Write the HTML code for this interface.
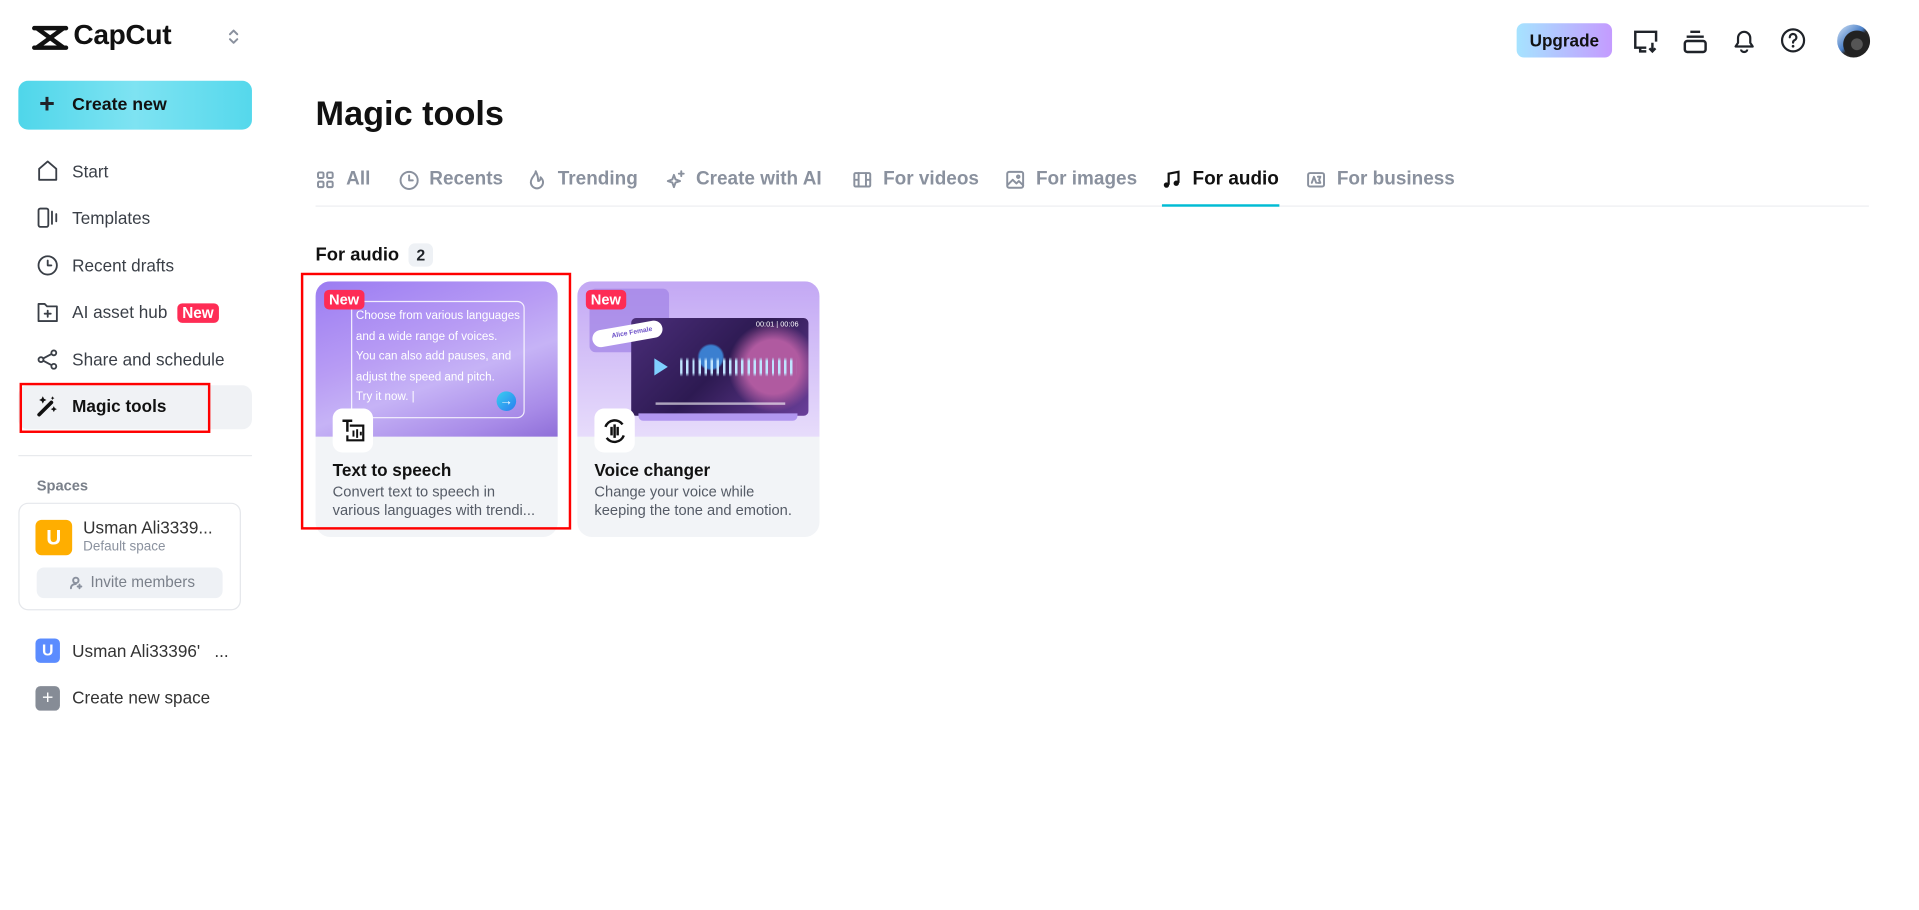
<!DOCTYPE html>
<html><head><meta charset="utf-8"><style>
html,body{margin:0;padding:0;width:1919px;height:910px;overflow:hidden;background:#fff}
#w{position:absolute;left:0;top:0;width:1569px;height:744px;transform:scale(1.2231);transform-origin:0 0;font-family:"Liberation Sans",sans-serif;color:#1f2329}
.a{position:absolute}
.nav{position:absolute;left:30px;font-size:14px;color:#3a3f47;height:20px;line-height:20px}
.nav svg{position:absolute;left:0;top:1px}
.nav span{position:absolute;left:29px;white-space:nowrap}
.tab{position:absolute;top:137px;font-size:15.5px;font-weight:bold;color:#8a919e;white-space:nowrap;height:20px;line-height:20px}
.tab svg{position:absolute;left:0;top:2px}
.tab span{position:absolute;left:25px}
.card{position:absolute;top:230px;width:198px;height:209px;border-radius:12px;overflow:hidden;background:#f2f4f7}
.new{position:absolute;background:#fe2c55;color:#fff;font-weight:bold;font-size:12px;padding:0 4px;height:16px;line-height:16px;border-radius:4px}
.ic{position:absolute;left:14px;top:104px;width:33px;height:36px;background:#fff;border-radius:8px}
.ct{position:absolute;left:14px;top:146px;font-size:14px;font-weight:bold;color:#111}
.cd{position:absolute;left:14px;top:165px;font-size:12px;line-height:15px;color:#555b66;width:180px}
.g{stroke:#8a919e;fill:none;stroke-width:1.6;stroke-linecap:round;stroke-linejoin:round}
.n{stroke:#3a3f47;fill:none;stroke-width:1.5;stroke-linecap:round;stroke-linejoin:round}
</style></head><body><div id="w">
<svg class="a" style="left:26px;top:20px" width="30" height="22" viewBox="0 0 30 22"><path d="M2 3h26M2 19h26M4 3l22 16M26 3L4 19" stroke="#111" stroke-width="3.6" fill="none" stroke-linecap="round"/></svg>
<div class="a" style="left:60px;top:15px;font-size:23px;font-weight:bold;color:#111;letter-spacing:-0.3px">CapCut</div>
<svg class="a" style="left:186px;top:22px" width="10" height="16" viewBox="0 0 10 16"><path d="M2 6l3-3 3 3M2 10l3 3 3-3" class="g" stroke="#555"/></svg>
<div class="a" style="left:15px;top:66px;width:191px;height:40px;border-radius:8px;background:linear-gradient(90deg,#4fd6ea,#7ee3f2 50%,#55d8ec)"></div>
<div class="a" style="left:32px;top:74px;font-size:22px;font-weight:bold;line-height:22px">+</div>
<div class="a" style="left:59px;top:78px;font-size:14.5px;font-weight:bold;color:#111">Create new</div>

<div class="nav" style="top:130px"><svg width="18" height="18" viewBox="0 0 18 18" class="n"><path d="M2 16V7l7-6 7 6v9z"/></svg><span>Start</span></div>
<div class="nav" style="top:168px"><svg width="18" height="18" viewBox="0 0 18 18" class="n"><rect x="1.5" y="1.5" width="8" height="15" rx="1.5"/><path d="M12.5 4v10M16 6v6"/></svg><span>Templates</span></div>
<div class="nav" style="top:207px"><svg width="18" height="18" viewBox="0 0 18 18" class="n"><circle cx="9" cy="9" r="7.5"/><path d="M9 5v4h3"/></svg><span>Recent drafts</span></div>
<div class="nav" style="top:245px"><svg width="18" height="18" viewBox="0 0 18 18" class="n"><path d="M1.5 2.5h5l2 2h8v12h-15z"/><path d="M9 8v5M6.5 10.5h5"/></svg><span>AI asset hub</span></div>
<div class="new" style="left:145px;top:248px;font-size:12.5px">New</div>
<div class="nav" style="top:284px"><svg width="18" height="18" viewBox="0 0 18 18" class="n"><circle cx="14" cy="3.5" r="2"/><circle cx="3.5" cy="9" r="2"/><circle cx="14" cy="14.5" r="2"/><path d="M5.5 8l6.5-3.5M5.5 10l6.5 3.5"/></svg><span>Share and schedule</span></div>
<div class="a" style="left:15px;top:315px;width:191px;height:36px;border-radius:8px;background:#f0f2f5"></div>
<div class="nav" style="top:322px;color:#111;font-weight:bold"><svg width="18" height="18" viewBox="0 0 18 18"><path d="M2 16L12 6" stroke="#111" stroke-width="3" stroke-linecap="round"/><path d="M5 1l1 2 2 1-2 1-1 2-1-2-2-1 2-1zM14 9l.8 1.7 1.7.8-1.7.8-.8 1.7-.8-1.7-1.7-.8 1.7-.8zM13 1l.5 1 1 .5-1 .5-.5 1-.5-1-1-.5 1-.5z" fill="#111"/></svg><span>Magic tools</span></div>
<div class="a" style="left:16px;top:313px;width:152px;height:37px;border:2px solid #f00"></div>
<div class="a" style="left:15px;top:372px;width:191px;height:1px;background:#e8eaed"></div>
<div class="a" style="left:30px;top:390px;font-size:12px;color:#7a808a;font-weight:bold">Spaces</div>
<div class="a" style="left:15px;top:411px;width:180px;height:86px;border:1px solid #e5e7eb;border-radius:8px"></div>
<div class="a" style="left:29px;top:425px;width:30px;height:29px;border-radius:5px;background:#ffae00;color:#fff;font-weight:bold;font-size:17px;text-align:center;line-height:29px">U</div>
<div class="a" style="left:68px;top:423px;font-size:14px;color:#333">Usman Ali3339...</div>
<div class="a" style="left:68px;top:441px;font-size:11px;color:#8a919e">Default space</div>
<div class="a" style="left:30px;top:464px;width:152px;height:25px;border-radius:6px;background:#eef1f5;font-size:12.5px;color:#7a808a;line-height:25px"><svg style="position:absolute;left:27px;top:7px" width="11" height="11" viewBox="0 0 11 11" class="g" stroke-width="1.2"><circle cx="5" cy="3.5" r="2.2"/><path d="M1 10c0-2.5 2-3.5 4-3.5M8 7v3M6.5 8.5h3"/></svg><span style="position:absolute;left:44px">Invite members</span></div>
<div class="a" style="left:29px;top:522px;width:20px;height:20px;border-radius:4px;background:#5b8cff;color:#fff;font-weight:bold;font-size:13px;text-align:center;line-height:20px">U</div>
<div class="a" style="left:59px;top:524px;font-size:14px;color:#333;white-space:pre">Usman Ali33396'   ...</div>
<div class="a" style="left:29px;top:561px;width:20px;height:20px;border-radius:4px;background:#868c96;color:#fff;font-size:16px;text-align:center;line-height:19px">+</div>
<div class="a" style="left:59px;top:562px;font-size:14px;color:#333">Create new space</div>

<div class="a" style="left:1240px;top:19px;width:78px;height:28px;border-radius:6px;background:linear-gradient(90deg,#a6e3ff,#c49bff);font-size:14px;font-weight:bold;text-align:center;line-height:28px;color:#111">Upgrade</div>
<svg class="a" style="left:1334px;top:23px" width="22" height="22" viewBox="0 0 22 22"><path d="M12 16H3V3h17v8M7 16v3h5" stroke="#1f2329" stroke-width="2" fill="none"/><path d="M17 12v7M14.5 16.5l2.5 2.5 2.5-2.5" stroke="#1f2329" stroke-width="2" fill="none"/></svg>
<svg class="a" style="left:1375px;top:23px" width="22" height="22" viewBox="0 0 22 22"><path d="M7 3h8M4 7h14" stroke="#1f2329" stroke-width="2"/><rect x="2.5" y="10.5" width="17" height="9" rx="2" stroke="#1f2329" stroke-width="2" fill="none"/></svg>
<svg class="a" style="left:1415px;top:22px" width="22" height="22" viewBox="0 0 22 22"><path d="M4 16h14l-2-3V9a5 5 0 0 0-10 0v4zM8.5 18.5a2.5 2 0 0 0 5 0" stroke="#1f2329" stroke-width="1.8" fill="none" stroke-linejoin="round"/></svg>
<svg class="a" style="left:1455px;top:22px" width="22" height="22" viewBox="0 0 22 22"><circle cx="11" cy="11" r="9" stroke="#1f2329" stroke-width="1.8" fill="none"/><path d="M8.3 8.5a2.7 2.7 0 1 1 3.7 2.5c-.8.4-1 .9-1 1.8" stroke="#1f2329" stroke-width="1.8" fill="none" stroke-linecap="round"/><circle cx="11" cy="15.8" r="1.1" fill="#1f2329"/></svg>
<div class="a" style="left:1502px;top:20px;width:27px;height:27px;border-radius:50%;background:radial-gradient(circle at 60% 60%,#555 0 20%,#222 22% 48%,transparent 50%),linear-gradient(135deg,#d8e8f8,#4a7fc8 45%,#2a2a2a 55%)"></div>

<div class="a" style="left:258px;top:77px;font-size:28px;font-weight:bold;color:#111">Magic tools</div>
<div class="tab" style="left:258px"><svg width="16" height="16" viewBox="0 0 16 16" class="g"><rect x="2" y="2" width="4.5" height="4.5" rx="1"/><rect x="9.5" y="2" width="4.5" height="4.5" rx="1"/><rect x="2" y="9.5" width="4.5" height="4.5" rx="1"/><rect x="9.5" y="9.5" width="4.5" height="4.5" rx="1"/></svg><span>All</span></div>
<div class="tab" style="left:326px"><svg width="17" height="17" viewBox="0 0 17 17" class="g"><circle cx="8.5" cy="8.5" r="7"/><path d="M8.5 4.5v4h3"/></svg><span>Recents</span></div>
<div class="tab" style="left:431px"><svg width="16" height="16" viewBox="0 0 16 16" class="g"><path d="M7 1c0 3-4 5-4 9a5 5 0 0 0 10 0c0-2-1-3-2-4 0 2-1 3-2 3 0-4-1-6-2-8z"/></svg><span>Trending</span></div>
<div class="tab" style="left:544px"><svg width="17" height="17" viewBox="0 0 17 17" class="g"><path d="M7 4l1.3 3.7L12 9l-3.7 1.3L7 14l-1.3-3.7L2 9l3.7-1.3zM13 1v4M11 3h4"/></svg><span>Create with AI</span></div>
<div class="tab" style="left:697px"><svg width="16" height="16" viewBox="0 0 16 16" class="g"><rect x="1.5" y="2.5" width="13" height="11" rx="1"/><path d="M5 2.5v11M11 2.5v11M1.5 8h3.5M11 8h3.5"/></svg><span>For videos</span></div>
<div class="tab" style="left:822px"><svg width="16" height="16" viewBox="0 0 16 16" class="g"><rect x="1.5" y="1.5" width="13" height="13" rx="1.5"/><path d="M2 12l4-4 3 3 2-2 3.5 3.5"/><circle cx="10.5" cy="5.5" r="1"/></svg><span>For images</span></div>
<div class="tab" style="left:950px;color:#111"><svg width="16" height="16" viewBox="0 0 16 16"><path d="M5.5 12V3l8-1.5v9" stroke="#111" stroke-width="1.8" fill="none"/><circle cx="3.7" cy="12.3" r="2.2" fill="#111"/><circle cx="11.7" cy="10.8" r="2.2" fill="#111"/></svg><span>For audio</span></div>
<div class="tab" style="left:1068px"><svg width="16" height="16" viewBox="0 0 16 16" class="g" stroke-width="1.3"><rect x="1.5" y="2.5" width="13" height="11" rx="1.5"/><path d="M4.5 10.5l1.8-5 1.8 5M9.5 5.5h2l-1 2.5 1 2.5h-2"/></svg><span>For business</span></div>
<div class="a" style="left:258px;top:168px;width:1270px;height:1px;background:#eceef1"></div>
<div class="a" style="left:950px;top:167px;width:96px;height:2px;background:#00bcd4"></div>

<div class="a" style="left:258px;top:200px;font-size:15px;font-weight:bold;color:#111">For audio</div>
<div class="a" style="left:334px;top:199px;width:20px;height:19px;border-radius:5px;background:#eef1f5;font-size:13px;font-weight:bold;text-align:center;line-height:19px">2</div>

<div class="card" style="left:258px">
 <div class="a" style="left:0;top:0;width:198px;height:127px;background:linear-gradient(160deg,#9b7cf2 0%,#b89cf4 40%,#c6b3f6 60%,#a88be8 85%,#8f6fd8 100%)"></div>
 <div class="a" style="left:29px;top:16px;width:140px;height:94px;border:1px solid rgba(255,255,255,.85);border-radius:6px"></div>
 <div class="a" style="left:33px;top:21px;width:140px;font-size:9.5px;line-height:16.5px;color:#fff;white-space:nowrap">Choose from various languages<br>and a wide range of voices.<br>You can also add pauses, and<br>adjust the speed and pitch.<br>Try it now. |</div>
 <div class="a" style="left:148px;top:90px;width:16px;height:16px;border-radius:50%;background:linear-gradient(135deg,#3ad0f0,#2a7cf0);color:#fff;font-size:11px;text-align:center;line-height:16px">→</div>
 <div class="new" style="left:7px;top:7px">New</div>
 <div class="ic"><svg style="position:absolute;left:7px;top:8px" width="20" height="20" viewBox="0 0 20 20"><path d="M1 2h8M5 2v9" stroke="#111" stroke-width="2"/><path d="M7 6h11v12H5v-4" stroke="#111" stroke-width="1.8" fill="none"/><path d="M10 10v5M13 9v7M16 11v3" stroke="#111" stroke-width="1.6"/></svg></div>
 <div class="ct">Text to speech</div>
 <div class="cd">Convert text to speech in<br>various languages with trendi...</div>
</div>
<div class="a" style="left:246px;top:223px;width:217px;height:206px;border:2px solid #f00"></div>

<div class="card" style="left:472px">
 <div class="a" style="left:0;top:0;width:198px;height:127px;background:linear-gradient(180deg,#c3a8f4,#e7dcfb)"></div>
 <div class="a" style="left:10px;top:6px;width:65px;height:52px;border-radius:5px;background:rgba(160,130,230,.7)"></div>
 <div class="a" style="left:44px;top:30px;width:145px;height:80px;border-radius:4px;background:radial-gradient(circle at 45% 40%,#3b7fd0 0 10%,transparent 12%),radial-gradient(circle at 80% 50%,#b05aa0 0 18%,transparent 30%),linear-gradient(135deg,#4b2e7a,#2d1a52 50%,#6a3f9a)"></div>
 <div class="a" style="left:50px;top:108px;width:130px;height:6px;background:#b197f0;border-radius:0 0 4px 4px"></div>
 <div class="a" style="left:146px;top:33px;font-size:6px;color:#fff">00:01 | 00:06</div>
 <div class="a" style="left:63px;top:63px;width:0;height:0;border-left:11px solid #7fd0ff;border-top:7px solid transparent;border-bottom:7px solid transparent"></div>
 <div class="a" style="left:84px;top:62px;width:95px;height:16px;background:repeating-linear-gradient(90deg,#bfe4ff 0 2px,transparent 2px 5px);-webkit-mask:linear-gradient(180deg,transparent,#000 20%,#000 80%,transparent)"></div>
 <div class="a" style="left:64px;top:99px;width:106px;height:2px;background:rgba(255,255,255,.6)"></div>
 <div class="a" style="left:12px;top:36px;width:58px;height:14px;border-radius:8px;background:#fff;transform:rotate(-10deg);font-size:5.5px;font-weight:bold;color:#6b4fc8;line-height:14px;text-indent:16px">Alice Female</div>
 <div class="new" style="left:7px;top:7px">New</div>
 <div class="ic"><svg style="position:absolute;left:6px;top:8px" width="21" height="21" viewBox="0 0 21 21"><path d="M3 7a8 8 0 0 1 14-2M18 14a8 8 0 0 1-14 2" stroke="#111" stroke-width="2" fill="none"/><path d="M8 7v7M10.5 5v11M13 7v7" stroke="#111" stroke-width="2"/></svg></div>
 <div class="ct">Voice changer</div>
 <div class="cd">Change your voice while<br>keeping the tone and emotion.</div>
</div>
</div></body></html>
